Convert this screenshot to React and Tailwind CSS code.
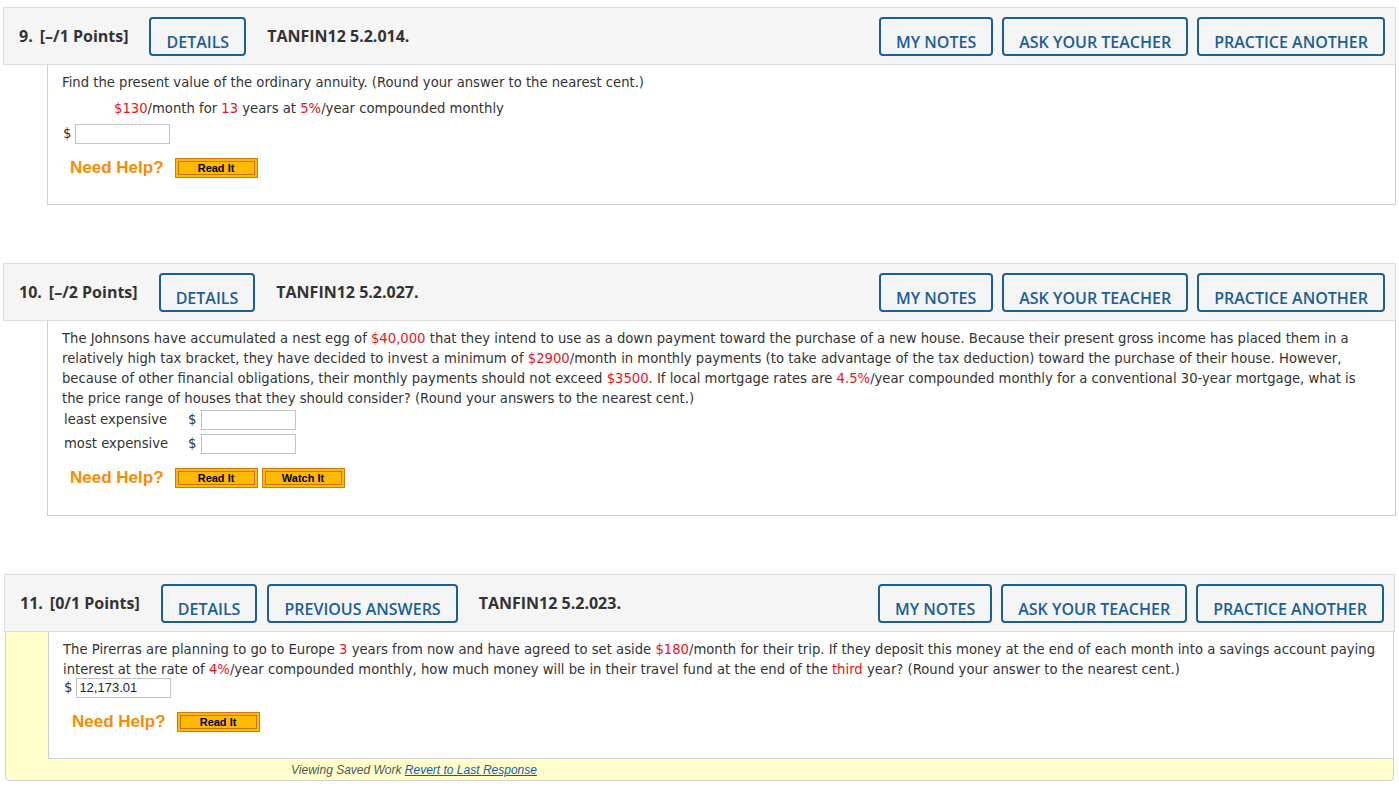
import React from 'react';

const HEAD_FONT = { fontFamily: '"Open Sans", "DejaVu Sans", sans-serif' };
const BODY_FONT = { fontFamily: '"DejaVu Sans", Verdana, sans-serif' };
const ARIAL = { fontFamily: '"Liberation Sans", Arial, sans-serif' };

function BlueButton({ children }) {
  return (
    <button
      className="h-[39px] border-2 border-[#1c5e98] rounded-[4px] px-[15px] pt-[12px] flex items-start text-[16px] leading-[22px] font-semibold text-[#1c5e98] bg-[#f5f5f5]"
      style={HEAD_FONT}
    >
      {children}
    </button>
  );
}

function HelpButton({ children }) {
  return (
    <button className="w-[83px] h-[20px] border border-[#d57a08] bg-[#ffb900] p-[2px]" style={ARIAL}>
      <span className="flex h-full items-center justify-center border border-[#c47310] text-[11px] font-bold leading-none text-black">
        {children}
      </span>
    </button>
  );
}

function NeedHelp({ buttons, indent }) {
  return (
    <div className={`mt-[14px] flex items-center ${indent}`}>
      <span className="text-[17px] font-bold text-[#f88c00] mr-[11px] leading-[20px]" style={ARIAL}>
        Need Help?
      </span>
      <div className="flex gap-[4px]">
        {buttons.map((b) => (
          <HelpButton key={b}>{b}</HelpButton>
        ))}
      </div>
    </div>
  );
}

function Header({ num, points, buttons, code, wide }) {
  return (
    <div
      className={`flex items-center h-[58px] bg-[#f5f5f5] border border-[#dcdcdc] pl-[15px] pr-[10px] text-[#333] ${wide ? '-mx-[2px] -mt-px' : ''}`}
      style={HEAD_FONT}
    >
      <span className="text-[16px] font-bold mr-[7px]">{num}</span>
      <span className="text-[16px] font-bold">{points}</span>
      <div className="ml-[21px] flex gap-[10px]">
        {buttons.map((b) => (
          <BlueButton key={b}>{b}</BlueButton>
        ))}
      </div>
      <span className="ml-[21px] text-[16px] font-bold">{code}</span>
      <div className="ml-auto flex gap-[9px]">
        <BlueButton>MY NOTES</BlueButton>
        <BlueButton>ASK YOUR TEACHER</BlueButton>
        <BlueButton>PRACTICE ANOTHER</BlueButton>
      </div>
    </div>
  );
}

const R = ({ children }) => <span className="text-[#e8141c]">{children}</span>;

function AnswerBox({ value }) {
  return (
    <div
      className="w-[95px] h-[20px] border border-[#c4c4c4] bg-white px-[2px] flex items-center text-[13px] text-[#222]"
      style={ARIAL}
    >
      {value}
    </div>
  );
}

export default function App() {
  return (
    <div className="min-h-screen bg-white px-[3px] pt-[7px] text-[13.2px] leading-[20px] text-[#333]" style={BODY_FONT}>
      {/* Problem 9 */}
      <div>
        <Header num="9." points="[–/1 Points]" buttons={['DETAILS']} code="TANFIN12 5.2.014." />
        <div className="ml-[44px] border-x border-b border-[#cfcfcf] pl-[14px] pt-[8px] pb-[26px]">
          <p>Find the present value of the ordinary annuity. (Round your answer to the nearest cent.)</p>
          <p className="mt-[6px] pl-[52px]">
            <R>$130</R>/month for <R>13</R> years at <R>5%</R>/year compounded monthly
          </p>
          <div className="mt-[5px] flex items-center gap-[4px] pl-[1px]">
            <span>$</span>
            <AnswerBox />
          </div>
          <NeedHelp buttons={['Read It']} indent="pl-[8px]" />
        </div>
      </div>

      {/* Problem 10 */}
      <div className="mt-[58px]">
        <Header num="10." points="[–/2 Points]" buttons={['DETAILS']} code="TANFIN12 5.2.027." />
        <div className="ml-[44px] border-x border-b border-[#cfcfcf] pl-[14px] pr-[14px] pt-[8px] pb-[27px]">
          <p>
            The Johnsons have accumulated a nest egg of <R>$40,000</R> that they intend to use as a down payment toward
            the purchase of a new house. Because their present gross income has placed them in a relatively high tax
            bracket, they have decided to invest a minimum of <R>$2900</R>/month in monthly payments (to take advantage
            of the tax deduction) toward the purchase of their house. However, because of other financial obligations,
            their monthly payments should not exceed <R>$3500</R>. If local mortgage rates are <R>4.5%</R>/year
            compounded monthly for a conventional 30-year mortgage, what is the price range of houses that they should
            consider? (Round your answers to the nearest cent.)
          </p>
          <div className="mt-[1px] flex items-center pl-[2px]">
            <span className="w-[124px]">least expensive</span>
            <span className="w-[13px]">$</span>
            <AnswerBox />
          </div>
          <div className="mt-[4px] flex items-center pl-[2px]">
            <span className="w-[124px]">most expensive</span>
            <span className="w-[13px]">$</span>
            <AnswerBox />
          </div>
          <NeedHelp buttons={['Read It', 'Watch It']} indent="pl-[8px]" />
        </div>
      </div>

      {/* Problem 11 */}
      <div className="mt-[58px] mx-[2px] border border-[#cfcfcf] rounded-b-[4px] bg-[#ffffcc]">
        <Header num="11." points="[0/1 Points]" buttons={['DETAILS', 'PREVIOUS ANSWERS']} code="TANFIN12 5.2.023." wide />
        <div className="ml-[42px] border-l border-b border-[#cfcfcf] bg-white pl-[14px] pr-[14px] pt-[8px] pb-[26px]">
          <p>
            The Pirerras are planning to go to Europe <R>3</R> years from now and have agreed to set aside{' '}
            <R>$180</R>/month for their trip. If they deposit this money at the end of each month into a savings account
            paying interest at the rate of <R>4%</R>/year compounded monthly, how much money will be in their travel
            fund at the end of the <R>third</R> year? (Round your answer to the nearest cent.)
          </p>
          <div className="-mt-[2px] flex items-center gap-[4px] pl-[1px]">
            <span>$</span>
            <AnswerBox value="12,173.01" />
          </div>
          <NeedHelp buttons={['Read It']} indent="pl-[9px]" />
        </div>
        <div className="h-[21px] pl-[285px] flex items-center text-[12px] italic text-[#555]" style={ARIAL}>
          Viewing Saved Work&nbsp;
          <a href="#" className="text-[#1a5aa8] underline">
            Revert to Last Response
          </a>
        </div>
      </div>
    </div>
  );
}
